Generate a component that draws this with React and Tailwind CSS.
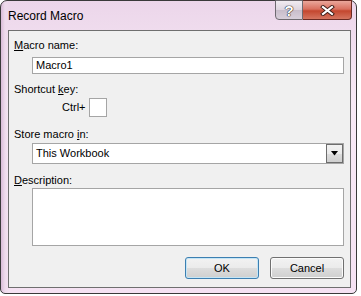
import React from 'react';

const font = { fontFamily: '"Liberation Sans", Arial, sans-serif' };

const btnBg =
  'bg-[linear-gradient(to_bottom,#f2f2f2_0%,#ebebeb_50%,#dddddd_51%,#cfcfcf_100%)]';

const Label = ({ children, className = '' }) => (
  <div className={`h-[13px] pl-[5px] text-[11px] leading-[13px] text-black ${className}`}>
    {children}
  </div>
);

const App = () => {
  return (
    <div className="w-[361px] h-[296px] bg-white" style={font}>
      <div className="w-[357px] h-[294px] flex flex-col rounded-t-[7px] rounded-b-[5px] border border-[#3a3a3a] bg-[linear-gradient(to_right,#d9bcd8_0px,#eedbec_4px,transparent_8px),linear-gradient(to_bottom,#ecd6ea_0%,#f8eaf6_35%,#f5e2f3_100%)]">
        {/* title bar */}
        <div className="h-[29px] flex items-start">
          <div className="pl-[7px] pt-[8px] text-[12px] leading-[15px] text-black">Record Macro</div>
          <div className="ml-auto mr-[4px] -mt-[1px] flex">
            <div className="w-[28px] h-[20px] flex items-center justify-center rounded-bl-[4px] border border-[#6e6a70] bg-[linear-gradient(to_bottom,#f1ecf1_0%,#ddd4de_50%,#c8bdca_51%,#d8cfda_100%)]">
              <span className="text-[15px] font-bold leading-none text-white [text-shadow:0_0_1px_#222,0_0_1px_#222,0_0_1px_#222]">?</span>
            </div>
            <div className="w-[49px] h-[20px] flex items-center justify-center rounded-br-[4px] border border-l-0 border-[#6b2a22] bg-[linear-gradient(to_bottom,#eaa79b_0%,#d9705f_45%,#c4472f_55%,#d57560_100%)]">
              <svg width="15" height="11" viewBox="0 0 15 11">
                <path d="M3 2 L12 9 M12 2 L3 9" stroke="#3a1a15" strokeWidth="4" strokeLinecap="square" />
                <path d="M3 2 L12 9 M12 2 L3 9" stroke="#ffffff" strokeWidth="2.2" strokeLinecap="square" />
              </svg>
            </div>
          </div>
        </div>

        {/* client area */}
        <div className="ml-[7px] w-[343px] h-[258px] border border-[#6f6f6f] bg-[#f0f0f0] flex flex-col">
          <Label className="mt-[8px]">
            <u>M</u>acro name:
          </Label>
          <div className="mt-[5px] ml-[23px] w-[312px] h-[17px] border border-[#a5a5a5] bg-white pl-[3px] text-[11px] leading-[15px] text-black">
            Macro1
          </div>

          <Label className="mt-[9px]">
            Shortcut <u>k</u>ey:
          </Label>
          <div className="mt-[2px] ml-[53px] h-[19px] flex items-center">
            <span className="text-[11px] leading-[13px] text-black">Ctrl+</span>
            <div className="ml-[3px] w-[18px] h-[19px] border border-[#a5a5a5] bg-white" />
          </div>

          <Label className="mt-[11px]">
            Store macro <u>i</u>n:
          </Label>
          <div className="mt-[2px] ml-[23px] w-[312px] h-[21px] border border-[#a5a5a5] bg-white flex">
            <div className="flex-1 pl-[3px] text-[11px] leading-[19px] text-black">This Workbook</div>
            <div className={`w-[17px] h-[19px] flex items-center justify-center border border-[#6d6d6d] ${btnBg}`}>
              <svg width="7" height="5" viewBox="0 0 7 5">
                <path d="M0 0 H7 L3.5 4.5 Z" fill="#000" />
              </svg>
            </div>
          </div>

          <Label className="mt-[10px]">
            <u>D</u>escription:
          </Label>
          <div className="mt-[1px] ml-[23px] w-[312px] h-[58px] border border-[#a5a5a5] bg-white" />

          <div className="mt-[11px] flex justify-end gap-[11px] pr-[6px]">
            <button
              type="button"
              className={`w-[74px] h-[22px] rounded-[3px] border border-[#3c7fb1] shadow-[inset_0_0_0_1px_#c4e5f6] text-[11px] text-black ${btnBg}`}
            >
              OK
            </button>
            <button
              type="button"
              className={`w-[74px] h-[22px] rounded-[3px] border border-[#707070] shadow-[inset_0_0_0_1px_#fbfbfb] text-[11px] text-black ${btnBg}`}
            >
              Cancel
            </button>
          </div>
        </div>
      </div>
    </div>
  );
};

export default App;
